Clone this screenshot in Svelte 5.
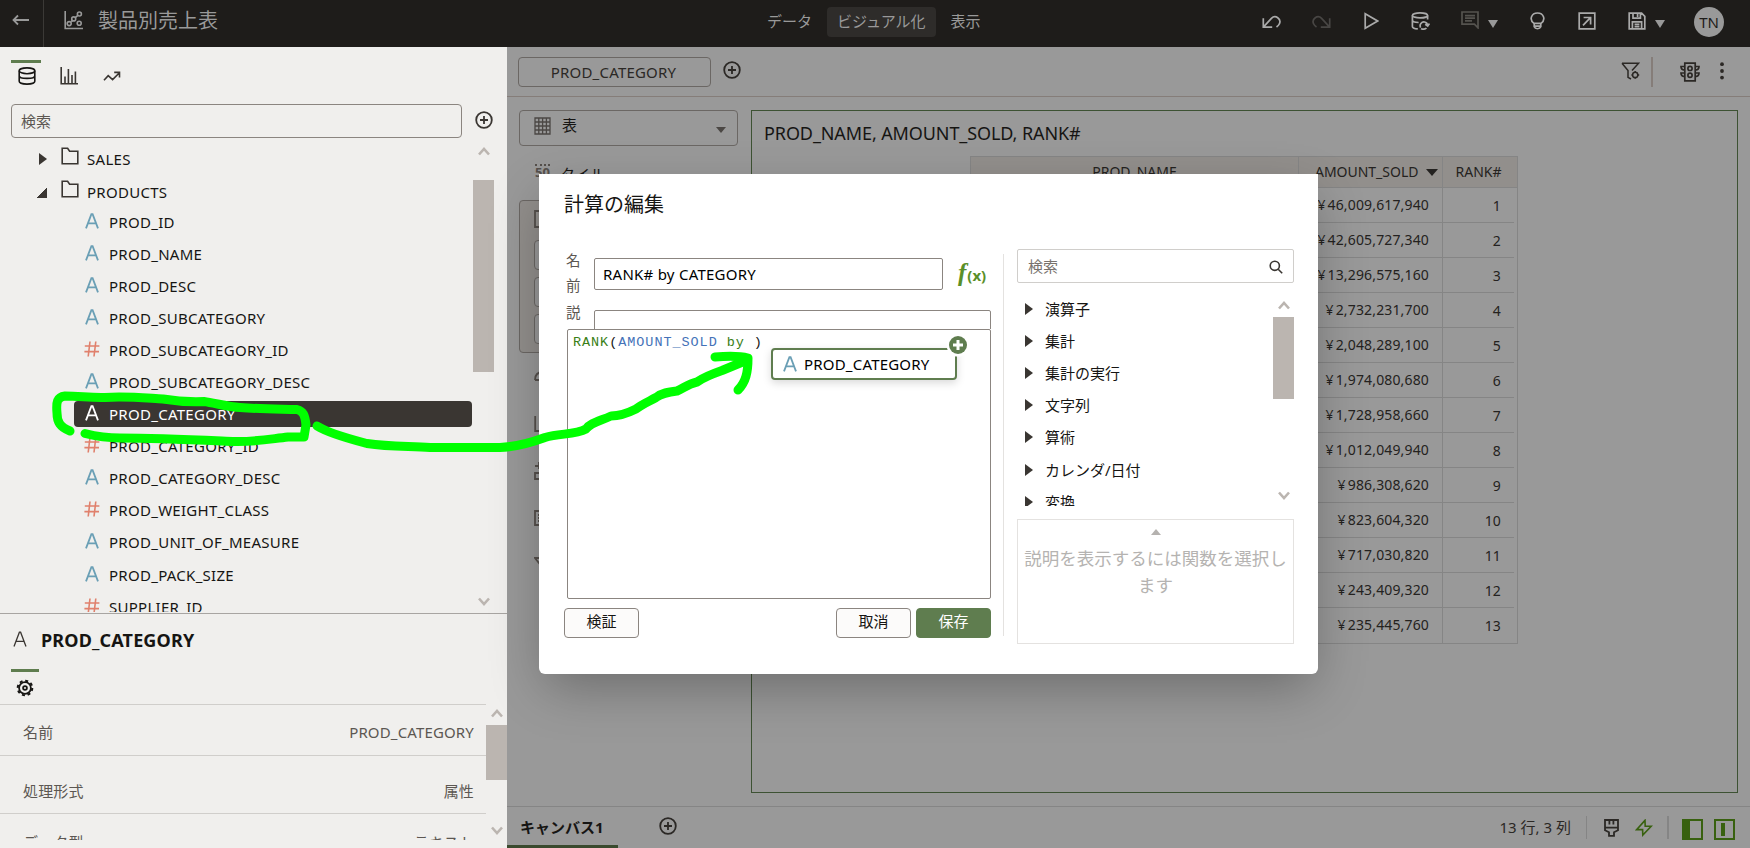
<script>
  const columns = [
    { name: 'PROD_ID', type: 'A' },
    { name: 'PROD_NAME', type: 'A' },
    { name: 'PROD_DESC', type: 'A' },
    { name: 'PROD_SUBCATEGORY', type: 'A' },
    { name: 'PROD_SUBCATEGORY_ID', type: '#' },
    { name: 'PROD_SUBCATEGORY_DESC', type: 'A' },
    { name: 'PROD_CATEGORY', type: 'A' },
    { name: 'PROD_CATEGORY_ID', type: '#' },
    { name: 'PROD_CATEGORY_DESC', type: 'A' },
    { name: 'PROD_WEIGHT_CLASS', type: '#' },
    { name: 'PROD_UNIT_OF_MEASURE', type: 'A' },
    { name: 'PROD_PACK_SIZE', type: 'A' },
    { name: 'SUPPLIER_ID', type: '#' },
  ]
  let selected = $state('PROD_CATEGORY')

  const properties = [
    { label: '名前', value: 'PROD_CATEGORY' },
    { label: '処理形式', value: '属性' },
    { label: 'データ型', value: 'テキスト' },
  ]

  const amounts = [
    '46,009,617,940', '42,605,727,340', '13,296,575,160', '2,732,231,700', '2,048,289,100',
    '1,974,080,680', '1,728,958,660', '1,012,049,940', '986,308,620', '823,604,320',
    '717,030,820', '243,409,320', '235,445,760',
  ]

  const functions = ['演算子', '集計', '集計の実行', '文字列', '算術', 'カレンダ/日付', '変換']
  let calcName = $state('RANK# by CATEGORY')
</script>

{#snippet plusCircle()}
  <svg class="ic" width="18" height="18" viewBox="0 0 18 18"><circle cx="9" cy="9" r="7.8" /><path d="M9 5v8M5 9h8" /></svg>
{/snippet}

{#snippet chevron(dir)}
  <svg class="chev" width="12" height="9" viewBox="0 0 12 9"><path d={dir === 'up' ? 'M1 7.5L6 2l5 5.5' : 'M1 1.5L6 7l5-5.5'} /></svg>
{/snippet}

{#snippet typeIcon(type)}
  <svg class="type" class:num={type === '#'} width="16" height="16" viewBox="0 0 16 16">
    {#if type === 'A'}
      <path d="M2 15.4L7.4 1.2h1.2L14 15.4M4.2 10.3h7.6" />
    {:else}
      <path d="M6 .5L4.2 15.5M11.8 .5L10 15.5M.8 5h14.6M.4 10.6H15" />
    {/if}
  </svg>
{/snippet}

<div class="app">
  <header>
    <div class="back"><svg class="ic" width="18" height="12" viewBox="0 0 18 12"><path d="M17 6H1.5M6 1.5L1.5 6 6 10.5" /></svg></div>
    <svg class="ic logo" width="19" height="19" viewBox="0 0 19 19"><path d="M1.2 0v17.5H19M7 10.5l2.200-1.200M11.200 6.600l2.400-2" /><circle cx="5.2" cy="12.6" r="2" /><circle cx="9.7" cy="7.9" r="2" /><circle cx="15.4" cy="3" r="2" /><circle cx="15.2" cy="12.3" r="2" /></svg>
    <h1>製品別売上表</h1>
    <nav>
      <span>データ</span>
      <span class="on">ビジュアル化</span>
      <span>表示</span>
    </nav>
    <div class="tools">
      <svg class="ic undo" width="19" height="14" viewBox="0 0 19 14"><path d="M1.3 3.2v8.9h8.9M1.6 11.8L9.4 3.4c4-4.2 10.2.6 8 5.4-.5 1.3-1.6 2.3-2.9 3.2" /></svg>
      <svg class="ic redo" width="19" height="14" viewBox="0 0 19 14"><path d="M17.7 3.2v8.9H8.8M17.4 11.8L9.6 3.4c-4-4.2-10.2.6-8 5.4.5 1.3 1.6 2.3 2.9 3.2" /></svg>
      <svg class="ic play" width="15" height="18" viewBox="0 0 15 18"><path d="M1.2 1.8v14.4L13.6 9z" /></svg>
      <svg class="ic dbr" width="19" height="18" viewBox="0 0 19 18"><ellipse cx="9" cy="3.4" rx="7.6" ry="2.5" /><path d="M1.4 3.4v11c0 1.2 2 2.2 5.4 2.5M16.6 3.4v4M1.4 8c0 1.5 2.5 2.4 6.2 2.5M9.6 15.6c-1.5-3 1-6 3.9-5.6 2 .3 3 1.8 3.2 3.600M14.2 12.2l2.5 1.8 1.8-2.4M10 16.6c1.6 1 4.400.7 5.400-.6" /></svg>
      <svg class="ic note" width="18" height="18" viewBox="0 0 18 18"><path d="M1 1h16v15.8l-3.600-3.600H1zM4 4.6h10M4 7.2h10M4 9.8h7" /></svg>
      <i class="caret"></i>
      <svg class="ic bulb" width="15" height="18" viewBox="0 0 15 18"><path d="M4.2 11.6C-1.4 7.6 1.6 1 7.5 1s8.9 6.6 3.3 10.6v3.2c-1 2.6-5.6 2.6-6.6 0zM4.2 11.4h6.6M4.4 14.2h6.2" /></svg>
      <svg class="ic open" width="18" height="18" viewBox="0 0 18 18"><path d="M1.2 1.2h15.6v15.6H1.2zM5 13.4l7.2-7.6M5.6 5.5h7v7" /></svg>
      <svg class="ic save" width="18" height="18" viewBox="0 0 18 18"><path d="M1.2 1.2h12.4l3.2 3.2v12.4H1.2zM5 1.4v4.8h7.4V1.4M9.6 2v3M4.4 16.6V9.8h9.2v6.8M6.6 12.4h4.8M6.6 14.6h4.8" /></svg>
      <i class="caret"></i>
      <div class="avatar">TN</div>
    </div>
  </header>

  <div class="body">
    <aside>
      <div class="tabs">
        <div class="tab on"><svg class="ic" width="18" height="18" viewBox="0 0 18 18"><ellipse cx="9" cy="3.8" rx="7.8" ry="2.9" /><path d="M1.2 3.8v10.4c0 1.6 3.4 2.9 7.8 2.9s7.8-1.3 7.8-2.9V3.8M1.2 8.700c0 1.6 3.4 2.7 7.8 2.7s7.8-1.1 7.8-2.7" /></svg></div>
        <div class="tab"><svg class="ic" width="18" height="18" viewBox="0 0 18 18"><path d="M1.2 0v16.8H18M5 9.5V17M8.4 2v15M12 8v9M15.4 4.5V17" /></svg></div>
        <div class="tab"><svg class="ic" width="18" height="18" viewBox="0 0 18 18"><path d="M1 13.2l4.2-4.6 4.4 4 6.6-6.6M11.2 5.4h5.3v5" /></svg></div>
      </div>
      <div class="search-row">
        <div class="search">検索</div>
        {@render plusCircle()}
      </div>
      <div class="tree-wrap">
        <div class="tree">
          <div class="folder">
            <i class="closed"></i>
            <svg class="ic" width="18" height="18" viewBox="0 0 18 18"><path d="M1.2 1.2h5.4l2 3h8.2v12.6H1.2z" /></svg>
            SALES
          </div>
          <div class="folder products">
            <i class="opened"></i>
            <svg class="ic" width="18" height="18" viewBox="0 0 18 18"><path d="M1.2 1.2h5.4l2 3h8.2v12.6H1.2z" /></svg>
            PRODUCTS
          </div>
          {#each columns as col}
            <div class="leaf" class:sel={col.name === selected}>
              <div>{@render typeIcon(col.type)}{col.name}</div>
            </div>
          {/each}
        </div>
        <div class="scroll">
          {@render chevron('up')}
          <div class="thumb"></div>
          {@render chevron('down')}
        </div>
      </div>
      <section class="props">
        <h2>{@render typeIcon('A')}{selected}</h2>
        <div class="gear"><svg class="ic" width="18" height="18" viewBox="0 0 18 18"><circle cx="9" cy="9" r="5.9" /><circle cx="9" cy="9" r="1.9" /><circle class="teeth" cx="9" cy="9" r="7.3" /></svg></div>
        <div class="proplist">
          <div class="rows">
            {#each properties as p}
              <div class="prop"><span>{p.label}</span><span>{p.value}</span></div>
            {/each}
          </div>
          <div class="scroll small">
            {@render chevron('up')}
            <div class="thumb"></div>
            {@render chevron('down')}
          </div>
        </div>
      </section>
    </aside>

    <main>
      <div class="filterbar">
        <div class="filter">PROD_CATEGORY</div>
        {@render plusCircle()}
        <svg class="ic funnel" width="19" height="18" viewBox="0 0 19 18"><path d="M1 1.2h16.6L11 8.4M1 1.2l6 7.4v6.8l3 1.6" /><circle cx="14.2" cy="12.900" r="2.6" /><path d="M14.2 9v1.4M14.2 15.4v1.400M10.400 12.9h1.200M16.8 12.9h1.400" /></svg>
        <div class="sep"></div>
        <svg class="ic light" width="20" height="20" viewBox="0 0 20 20"><path d="M4.8 1.2h10.4v17.6H4.8zM4.6 4.5H1c0 2.4 1 3.4 3.6 3.6M4.6 11H1c0 2.4 1 3.4 3.6 3.6M15.4 4.5H19c0 2.4-1 3.4-3.6 3.6M15.4 11H19c0 2.4-1 3.4-3.6 3.6" /><circle cx="10" cy="6.4" r="2.1" /><circle cx="10" cy="13.2" r="2.1" /></svg>
        <svg class="dots" width="4" height="18" viewBox="0 0 4 18"><circle cx="2" cy="2.2" r="1.9" /><circle cx="2" cy="9" r="1.9" /><circle cx="2" cy="15.6" r="1.9" /></svg>
      </div>

      <div class="content">
        <div class="grammar">
          <div class="viztype">
            <svg width="17" height="18" viewBox="0 0 17 18"><path class="gridic" d="M1 1h15v16H1zM1 5h15M1 9h15M1 13h15M4.8 1v16M8.6 1v16M12.4 1v16" /></svg>
            <span>表</span>
            <i class="caret dark"></i>
          </div>
          <div class="tile"><b>50</b><span>タイル</span></div>
          <div class="shelf">
            <svg class="ic" width="18" height="18" viewBox="0 0 18 18"><path d="M1 1h16v16H1zM5 5h8M5 9h8M5 13h8" /></svg>
            <div></div><div></div><div></div>
          </div>
          <div class="slots">
            <svg class="ic" width="18" height="18" viewBox="0 0 18 18"><path d="M1 12c0-5 3-8 8-8M1 12h10" /></svg>
            <svg class="ic" width="18" height="18" viewBox="0 0 18 18"><path d="M1.2 1v15H17" /></svg>
            <svg class="ic" width="18" height="18" viewBox="0 0 18 18"><path d="M1 4h8M5 0v7M1 11h6v6H1z" /></svg>
            <svg class="ic" width="18" height="18" viewBox="0 0 18 18"><path d="M1 2h16v14H1zM4 6h9M4 9h9M4 12h9" /></svg>
            <svg class="ic" width="18" height="18" viewBox="0 0 18 18"><path d="M1 2h16L9 12z" /></svg>
          </div>
        </div>
        <div class="viz">
          <h3>PROD_NAME, AMOUNT_SOLD, RANK#</h3>
          <div class="table">
            <div class="tr th"><div>PROD_NAME</div><div>AMOUNT_SOLD<i class="caret sort"></i></div><div>RANK#</div></div>
            {#each amounts as amount, i}
              <div class="tr"><div></div><div><span>¥</span>{amount}</div><div>{i + 1}</div></div>
            {/each}
          </div>
        </div>
      </div>

      <footer>
        <div class="canvas">キャンバス1</div>
        {@render plusCircle()}
        <span class="count">13 行, 3 列</span>
        <div class="fsep"></div>
        <svg class="ic brush" width="15" height="18" viewBox="0 0 15 18"><path d="M1 1h13v7.6H1zM1 8.6v2.6l4 2v3.6h5v-3.600l4-2V8.6M5.4 1v4.4M9.4 1v4.4" /></svg>
        <svg class="ic bolt" width="18" height="18" viewBox="0 0 18 18"><path d="M10 1.4L1.6 10.6h6L7.8 16l8.4-8.8h-6z" /></svg>
        <div class="fsep wide"></div>
        <div class="pane left"></div>
        <div class="pane mid"><i></i></div>
      </footer>
    </main>
  </div>

  <div class="modal">
    <h2>計算の編集</h2>
    <div class="mbody">
      <div class="calc">
        <div class="field">
          <label for="calc-name">名前</label>
          <input id="calc-name" bind:value={calcName} />
          <div class="fx"><em>f</em><b>(x)</b></div>
        </div>
        <div class="field desc">
          <span class="lbl">説明</span>
          <div class="descbox"></div>
        </div>
        <div class="editor"><span class="fn">RANK</span>(<span class="colref">AMOUNT_SOLD</span> <span class="fn">by</span> )</div>
        <div class="buttons">
          <button>検証</button>
          <button class="cancel">取消</button>
          <button class="primary">保存</button>
        </div>
      </div>
      <div class="vr"></div>
      <div class="fnpane">
        <div class="fnsearch">検索<svg class="ic" width="14" height="14" viewBox="0 0 14 14"><circle cx="5.8" cy="5.8" r="4.6" /><path d="M9.2 9.2l4 4" /></svg></div>
        <div class="fnwrap">
          <div class="fnlist">
            {#each functions as f}
              <div><i class="closed"></i>{f}</div>
            {/each}
          </div>
          <div class="scroll fnscroll">
            {@render chevron('up')}
            <div class="thumb"></div>
            {@render chevron('down')}
          </div>
        </div>
        <div class="help">
          <i></i>
          <p>説明を表示するには関数を選択します</p>
        </div>
      </div>
    </div>
  </div>

  <!-- column being dragged into the expression -->
  <div class="drag">
    {@render typeIcon('A')}PROD_CATEGORY
    <svg class="badge" width="24" height="24" viewBox="0 0 24 24"><circle cx="12" cy="12" r="11.5" fill="#fff" /><circle cx="12" cy="12" r="9" fill="#5f7d4f" /><path d="M12 7v10M7 12h10" stroke="#fff" stroke-width="3" /></svg>
  </div>

  <svg class="ink" width="1750" height="848" viewBox="0 0 1750 848">
    <path d="M70 431C60 427 57 422 57 413C56 402 57 397 65 396C80 396 90 398 105 397.500C125 396 145 398 163 399C175 401 190 402 204 401.500C215 403 228 407 240 407.500C260 409 280 409 297 409.500C303 411 305 415 306 425L304 437L288 437C270 439 255 442 235 441.500C200 440 160 438 120 438C105 438 95 436 85 433.500" />
    <path d="M317 426C330 434 350 439 367 443.500C390 447 410 446 430 447.500H500C515 447 530 443 545 437.500C560 433 575 435 586 429C590 423 600 421 611 416C620 416 628 413 636 409C642 404 650 401 656 397.500C662 393 668 392 677 391C684 388 688 384 697 382C704 377 712 374 722 370.500L745 361" />
    <path d="M715 357C728 356 740 356 748 358C748 372 746 382 738 390" />
  </svg>
</div>

<style>
  :global(body) { margin:0; overflow:hidden; }
  .app { position:relative; width:1750px; height:848px; overflow:hidden; font-family:"Noto Sans","Noto Sans CJK JP",sans-serif; font-size:15px; line-height:24px; color:#161513; box-sizing:border-box; }
  .app :global(*) { box-sizing:border-box; }
  h1, h2, h3, p { margin:0; font-weight:400; }
  svg { flex:none; display:block; }
  .ic { fill:none; stroke:currentColor; stroke-width:1.8; }

  header { height:47px; background:#1e1c1a; color:#999; display:flex; align-items:flex-start; }
  .back { width:44px; height:47px; padding:14px 0 0 12px; border-right:1px solid #3b3936; }
  .logo { margin:11px 0 0 20px; stroke-width:1.6; }
  h1 { font-size:20px; line-height:42px; margin-left:15px; width:659px; }
  nav { display:flex; padding-top:7px; line-height:28px; }
  nav span { padding:0 10px; height:30px; }
  nav .on { background:#2e2c2a; border-radius:4px; margin:0 5px; }
  .tools { display:flex; margin-left:auto; width:489px; padding-top:7px; }
  .tools .ic { color:#aaa; stroke-width:1.7; }
  .tools .undo { margin:8px 0 0 1px; }
  .tools .redo { margin:8px 0 0 31px; color:#484644; }
  .tools .play { margin:5px 0 0 33px; }
  .tools .dbr { margin:5px 0 0 32px; }
  .tools .note { margin:4px 0 0 31px; color:#55534f; }
  .caret { width:0; height:0; border:5.500px solid transparent; border-top:8px solid #999; border-bottom:0; margin:13px 0 0 9px; }
  .tools .bulb { margin:5px 0 0 32px; }
  .tools .open { margin:5px 0 0 33px; }
  .tools .save { margin:5px 0 0 32px; }
  .avatar { margin-left:29px; width:30px; height:30px; border-radius:50%; background:#999; color:#1e1c1a; text-align:center; line-height:30px; font-size:15px; }

  .body { display:flex; height:801px; }
  aside { width:507px; background:#f0efed; display:flex; flex-direction:column; }
  .tabs { display:flex; height:57px; padding:13px 0 0 11px; gap:12px; color:#3a3632; }
  .tab { width:30px; height:25px; border-top:3px solid transparent; padding:4px 0 0 7px; }
  .tab.on { border-color:#5f7d4f; color:#161513; }
  .tab .ic { stroke-width:1.6; }
  .tab:last-child { padding-left:8px; }
  .search-row { display:flex; height:34px; padding-left:11px; color:#3a3632; }
  .search { width:451px; border:1px solid #8b8580; border-radius:4px; padding:0 9px; line-height:32px; color:#5c5752; }
  .search-row .ic { margin:7px 0 0 13px; }
  .tree-wrap { display:flex; height:474px; }
  .tree { width:473px; overflow:hidden; padding-top:1px; letter-spacing:.28px; }
  .folder { display:flex; align-items:center; height:35px; padding:5px 0 0 39px; }
  .folder .ic { margin:-6px 8px 0 14px; color:#3a3632; stroke-width:1.6; }
  .folder.products { height:32px; padding:4px 0 0 36px; }
  .closed { width:0; height:0; border:6.500px solid transparent; border-left:8px solid #3a3632; border-right:0; }
  .opened { width:11px; height:11px; background:linear-gradient(135deg, transparent 50%, #3a3632 50%); }
  .leaf { height:32.060px; padding:3px 1px 3px 74px; }
  .leaf div { display:flex; align-items:center; height:26px; padding-left:10px; gap:9px; border-radius:4px; }
  .leaf.sel div { background:#3a3632; color:#fff; }
  .type { fill:none; stroke:#6a9fb5; stroke-width:1.8; }
  .type.num { stroke:#e0806c; stroke-width:1.6; }
  .leaf .type { margin-top:-2px; }
  .leaf.sel .type { stroke:#fff; }
  .chev { fill:none; stroke:#bbb5b0; stroke-width:2.6; }
  .scroll { width:21px; display:flex; flex-direction:column; align-items:center; padding-top:9px; }
  .thumb { width:21px; height:192px; background:#bbb5b0; margin:24px 0 225px; }
  .props { border-top:1px solid #a8a5a2; margin-top:1px; height:235px; }
  .props h2 { display:flex; align-items:center; gap:13px; padding:0 0 1px 12px; height:59px; margin-top:-3px; line-height:30px; font-size:18px; font-weight:700; letter-spacing:.15px; }
  .props h2 .type { stroke:#3a3632; stroke-width:1.3; margin-top:-3px; }
  .gear { width:28px; margin-left:11px; border-top:3px solid #5f7d4f; padding:7px 0 0 5px; height:35px; margin-top:-1px; }
  .gear .teeth { stroke-width:2; stroke-dasharray:3 2.730; }
  .proplist { display:flex; height:136px; overflow:hidden; }
  .rows { width:486px; }
  .prop { display:flex; justify-content:space-between; align-items:center; height:51px; border-top:1px solid #d0cecb; padding:4px 12px 0 23px; color:#5c5752; }
  .prop span { letter-spacing:.15px; }
  .prop:nth-child(2) { height:58px; padding-top:12px; }
  .prop:nth-child(3) { height:56px; padding-top:0; }
  .small { padding-top:5px; }
  .small .thumb { height:55px; margin:7px 0 46px; }

  main { width:1243px; background:#999; display:flex; flex-direction:column; }
  .filterbar { height:50px; border-bottom:1px solid #857d79; display:flex; padding:10px 0 0 11px; color:#2b2825; }
  .filter { width:193px; height:30px; border:1px solid #6b6764; border-radius:4px; text-align:center; line-height:28px; padding-right:2px; margin-right:12px; letter-spacing:.2px; }
  .filterbar > .ic { margin-top:4px; }
  .filterbar .funnel { margin:5px 0 0 auto; stroke-width:1.5; }
  .sep { width:2px; height:30px; background:#857d79; margin:0 27px 0 11px; }
  .filterbar .light { margin:5px 20px 0 0; stroke-width:1.7; }
  .dots { margin:5px 26px 0 0; fill:#2b2825; }
  .content { display:flex; height:709px; padding:13px 12px 13px 12px; overflow:hidden; }
  .grammar { width:219px; margin-right:13px; }
  .viztype { display:flex; height:36px; border:1px solid #6b6764; border-radius:4px; padding:6px 11px 0 14px; }
  .viztype span { margin:-4px 0 0 11px; }
  .gridic { fill:none; stroke:#4b4744; stroke-width:1.3; }
  .caret.dark { border-width:6px 5px 0; border-top-color:#4b4744; margin:10px 0 0 auto; }
  .tile { display:flex; height:54px; padding:16px 0 0 16px; }
  .tile b { font-size:13px; border-top:2px dotted #55504c; line-height:13px; height:18px; color:#55504c; margin-top:2px; }
  .tile span { margin-left:10px; }
  .shelf { height:153px; border:1px solid #6b6764; border-radius:4px; background:#928f8c; padding:9px 14px; color:#55504c; }
  .shelf div { height:30px; border:1px solid #6b6764; border-radius:4px; background:#999; margin-bottom:7px; }
  .shelf .ic { margin-bottom:12px; }
  .slots { padding:15px; display:flex; flex-direction:column; gap:29px; color:#55504c; }
  .viz { width:987px; border:1px solid #3d5233; padding-left:12px; }
  h3 { font-size:18px; line-height:44px; height:45px; letter-spacing:-.1px; }
  .table { width:548px; margin-left:206px; border:1px solid #858585; font-size:14px; color:#242220; height:488px; }
  .tr { display:grid; grid-template-columns:327px 144px 72px; width:543px; height:35px; line-height:33px; border-bottom:1px solid #858585; text-align:right; }
  .tr:last-child { border:0; }
  .tr div { padding-right:13px; letter-spacing:.15px; }
  .tr div span { margin-right:2px; }
  .tr div + div { border-left:1px solid #858585; }
  .tr div:last-child { padding-right:13px; line-height:35px; }
  .th { height:31px; width:546px; padding-right:3px; background:#928f8c; text-align:center; }
  .th div, .th div:last-child { padding:0; line-height:30px; letter-spacing:-.02px; }
  .th div:nth-child(2) { display:flex; padding-left:16px; }
  .caret.sort { border-width:7px 6px 0; border-top-color:#242220; margin:12px 0 0 8px; }

  footer { height:42px; border-top:1px solid #858585; display:flex; color:#2b2825; }
  .canvas { width:111px; border-bottom:3px solid #3a4a2e; padding-left:13px; font-weight:700; color:#161513; line-height:40px; }
  footer > .ic { margin:10px 0 0 41px; }
  .count { margin-left:auto; line-height:40px; }
  .fsep { width:1px; height:23px; background:#858585; margin:9px 17px 0 15px; }
  .fsep.wide { width:2px; margin:9px 13px 0 14px; }
  footer .brush { margin:12px 16px 0 0; stroke-width:1.8; }
  footer .bolt { color:#38610f; margin:12px 0 0 0; stroke-width:1.6; }
  .pane { width:21px; height:21px; border:2px solid #38610f; margin-top:12px; }
  .pane.left { border-left-width:8px; margin-right:11px; }
  .pane.mid { margin-right:15px; padding:2px 0 0 5px; }
  .pane.mid i { display:block; width:4px; height:13px; background:#38610f; }

  .modal { position:absolute; left:539px; top:174px; width:779px; height:500px; background:#fff; border-radius:0 0 6px 6px; box-shadow:0 18px 50px -6px rgba(0,0,0,.3); padding-left:25px; }
  .modal h2 { font-size:20px; line-height:61px; height:75px; }
  .mbody { display:flex; }
  .calc { width:427px; }
  .field { display:flex; height:51px; align-items:center; padding-left:2px; }
  label, .lbl { width:15px; margin-right:13px; color:#5c5752; font-size:14.500px; line-height:25px; word-break:break-all; }
  label { margin-top:-3px; }
  input { width:349px; height:32px; border:1px solid #8b8580; border-radius:2px; padding:0 8px; margin-top:-1px; font:15px "Noto Sans","Noto Sans CJK JP",sans-serif; letter-spacing:.25px; color:#000; outline:0; }
  .fx { margin-left:15px; color:#5a8f29; display:flex; align-items:baseline; line-height:26px; margin-top:-2px; }
  .fx em { font:italic bold 25px "Liberation Serif",serif; margin-right:1px; }
  .fx b { font-size:15px; }
  .desc { height:29px; align-items:flex-start; padding-top:0; overflow:hidden; }
  .desc .lbl { height:25px; overflow:hidden; }
  .descbox { flex:1; height:40px; border:1px solid #8b8580; border-radius:2px; margin-top:10px; }
  .editor { margin-left:3px; width:424px; height:270px; border:1px solid #8b8580; border-radius:2px; background:#fff; padding:1px 5px; font:13.500px/24px "Liberation Mono",monospace; letter-spacing:.94px; white-space:pre; }
  .fn { color:#3a8016; }
  .colref { color:#4472b8; }
  .buttons { display:flex; gap:5px; padding-top:9px; }
  button { width:75px; height:30px; border:1px solid #8b8580; border-radius:4px; background:#fcfbfa; font:15px/24px "Noto Sans","Noto Sans CJK JP",sans-serif; color:#161513; padding:0 0 4px; }
  .cancel { margin-left:auto; }
  .primary { background:#5f7d4f; border-color:#5f7d4f; color:#fff; }
  .vr { width:1px; height:382px; margin:5px 13px 0 12px; background:#e4e2e0; }
  .fnpane { width:277px; }
  .fnsearch { display:flex; justify-content:space-between; height:34px; border:1px solid #d0cecb; border-radius:2px; padding:0 10px; line-height:33px; color:#77726d; }
  .fnsearch .ic { margin-top:10px; color:#3a3632; stroke-width:1.6; }
  .fnwrap { display:flex; height:223px; }
  .fnlist { width:256px; overflow:hidden; padding-top:10px; }
  .fnlist div { display:flex; align-items:center; gap:12px; height:32.100px; padding-left:8px; }
  .fnscroll { padding-top:18px; }
  .fnscroll .thumb { height:82px; margin:7px 0 92px; flex:none; }
  .help { margin-top:13px; height:125px; border:1px solid #e4e2e0; text-align:center; padding-top:9px; }
  .help i { display:block; width:0; height:0; margin:0 auto; border:5px solid transparent; border-top:0; border-bottom:6px solid #b5b2af; }
  .help p { font-size:17.500px; line-height:27px; margin:10px 5px 0; color:#b5b3b1; }

  .drag { position:absolute; left:771px; top:348px; width:186px; height:32px; border:2px solid #5f7d4f; border-radius:4px; background:#fff; box-shadow:0 3px 8px rgba(0,0,0,.15); display:flex; align-items:center; gap:6px; padding-left:9px; color:#000; letter-spacing:.2px; }
  .badge { position:absolute; right:-15px; top:-17px; }
  .ink { position:absolute; left:0; top:0; fill:none; stroke:#00ff00; stroke-width:9; stroke-linecap:round; stroke-linejoin:round; pointer-events:none; }
</style>
